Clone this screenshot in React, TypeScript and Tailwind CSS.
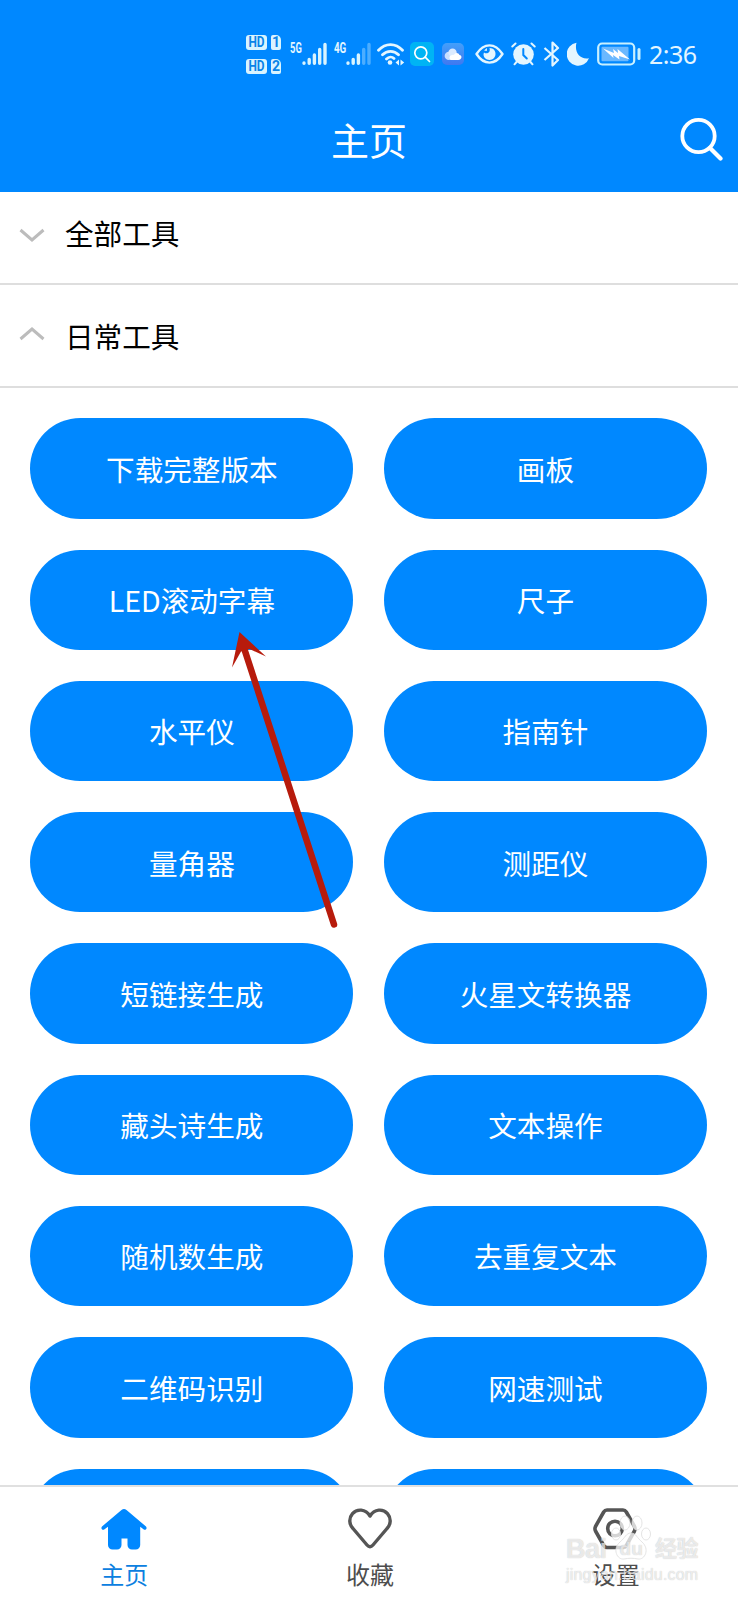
import type { ReactNode } from 'react'

const tools = [
  '下载完整版本',
  '画板',
  'LED滚动字幕',
  '尺子',
  '水平仪',
  '指南针',
  '量角器',
  '测距仪',
  '短链接生成',
  '火星文转换器',
  '藏头诗生成',
  '文本操作',
  '随机数生成',
  '去重复文本',
  '二维码识别',
  '网速测试',
  '',
  '',
]

function HdBadge({ sim }: { sim: string }) {
  return (
    <div className="flex h-[15px] gap-1 text-[14px] leading-[15px] font-bold text-[#0a84e8]">
      <span className="flex w-[21px] justify-center rounded-[3px] bg-[#d9f4ff]">
        <span className="scale-x-[0.85]">HD</span>
      </span>
      <span className="w-[10px] rounded-[2px] rounded-tr-[5px] bg-[#d9f4ff] text-center">{sim}</span>
    </div>
  )
}

function Signal({ dim }: { dim: boolean }) {
  return (
    <svg width="25" height="24" viewBox="0 0 25 24" stroke="#d9f4ff" strokeWidth="3.4" strokeLinecap="round">
      <path d="M2 21v.2M7.2 17.500v3.700M12.400 13v8.200" />
      <path d="M17.700 7.500v13.700M23 2.500v18.700" opacity={dim ? 0.35 : 1} />
    </svg>
  )
}

function StatusBar() {
  return (
    <div className="flex h-[108px] items-center pl-[246px] font-['Roboto',sans-serif] text-[#e4f6ff]">
      <div className="flex w-[35px] shrink-0 flex-col gap-[9px]">
        <HdBadge sim="1" />
        <HdBadge sim="2" />
      </div>

      <span className="ml-[9px] w-[12px] -translate-y-[6px] text-[14px] leading-none font-bold">
        <span className="inline-block origin-left scale-x-[0.67]">5G</span>
      </span>
      <Signal dim={false} />
      <span className="ml-[7px] w-[12px] -translate-y-[6px] text-[14px] leading-none font-bold">
        <span className="inline-block origin-left scale-x-[0.7]">4G</span>
      </span>
      <Signal dim />

      {/* wifi with traffic arrows */}
      <svg className="ml-[6px] shrink-0" width="28" height="24" viewBox="0 0 28 24" fill="none" stroke="currentColor" strokeWidth="2.800" strokeLinecap="round">
        <path d="M1.500 8.300C8.500.8 18.500.8 25.500 8.300M5.500 12.700c4.500-4.500 11.500-4.500 16 0M9.500 17c2.500-2.500 5.500-2.500 7.500-.5" />
        <circle cx="13" cy="20.500" r="2.300" fill="currentColor" stroke="none" />
        <path d="M22 17.500v6l-3.500-3zM23.500 17.500v6l3.700-3z" fill="currentColor" stroke="none" />
      </svg>

      <div className="ml-[5px] flex size-[24px] shrink-0 items-center justify-center rounded-[5px] bg-[#00b4f4]">
        <svg width="18" height="18" viewBox="0 0 18 18" fill="none" stroke="white" strokeWidth="1.700" strokeLinecap="round">
          <circle cx="7.800" cy="7.800" r="6" />
          <path d="m12.200 12.200 4.300 4.300" />
        </svg>
      </div>

      <div className="ml-[8px] flex size-[22px] shrink-0 items-center justify-center rounded-[5px] bg-gradient-to-b from-[#439ffa] to-[#3f78f0]">
        <svg width="18" height="13" viewBox="0 0 19 14">
          <circle cx="5" cy="8.500" r="4.500" fill="#c8dfff" />
          <circle cx="9" cy="5" r="4.500" fill="#dcebff" />
          <path d="M7 13a3 3 0 0 1 0-5c2-1 3-1 3.500-.5 1-3 5-3 6 0C20 8 19 13 15 13z" fill="white" />
        </svg>
      </div>

      {/* eye comfort */}
      <svg className="ml-[11px] shrink-0" width="29" height="20" viewBox="0 0 29 20" fill="none" stroke="currentColor">
        <path d="M1.500 10C9-1.500 20-1.500 27.500 10 20 21.500 9 21.500 1.500 10z" strokeWidth="2.400" strokeLinejoin="round" />
        <path d="M14.500 4c4 0 6 2.800 6 6s-2.500 6-6 6-6-2.800-6-5.500c0-.7.300-1.500.5-2 2.500 2 7 .5 5.500-4.500z" fill="currentColor" stroke="none" />
        <path d="M9 6.500l3-2.500-.2 3z" fill="currentColor" stroke="none" />
      </svg>

      {/* alarm */}
      <svg className="ml-[7px] shrink-0" width="25" height="24" viewBox="0 0 25 24" fill="none" stroke="currentColor" strokeWidth="2" strokeLinecap="round">
        <circle cx="12.500" cy="12.500" r="10.300" fill="currentColor" stroke="none" />
        <path d="M1.300 4.500 4.500 1.500M20.500 1.500 23.700 4.500M5.500 20l-2 2.300M19.500 20l2 2.300" />
        <path d="M12.300 7v6l3.500 3.500" stroke="#0088ff" strokeWidth="2" />
      </svg>

      <svg className="ml-[7px] shrink-0" width="17" height="26" viewBox="0 0 17 26" fill="none" stroke="currentColor" strokeWidth="2.200" strokeLinejoin="round">
        <path d="m1.500 7 13.500 12-5.500 5.500V1.500L15 7 1.500 19" />
      </svg>

      <svg className="ml-[7px] shrink-0" width="23" height="24" viewBox="0 0 23 24" fill="currentColor">
        <path d="M9.500.8C7 10 13 18 22 16.200A11.500 11.500 0 1 1 9.500.8z" />
      </svg>

      {/* battery */}
      <svg className="ml-[7px] shrink-0" width="44" height="24" viewBox="0 0 44 24">
        <rect x="1.200" y="1.500" width="36" height="21" rx="4" fill="none" stroke="#c8f0ff" strokeWidth="2.200" />
        <rect x="4.500" y="4.800" width="27" height="14.500" rx="1" fill="#6ab8ff" />
        <path d="M6 6.500 17 11l-1-4 5 4-.5-4L33 17.500 22 14l.5 3.500L16 13l.5 3z" fill="white" />
        <path d="M42 7.500v9" stroke="#c8f0ff" strokeWidth="3" strokeLinecap="round" />
      </svg>

      <span className="ml-[8px] font-['Noto_Sans',sans-serif] text-[25px] leading-none tracking-[-0.5px]">2:36</span>
    </div>
  )
}

function GroupRow({ title, open, className }: { title: string; open: boolean; className: string }) {
  return (
    <div className={`flex shrink-0 items-center border-b-2 border-[#dedede] pl-[19px] ${className}`}>
      <svg className={open ? '-mt-[4px]' : ''} width="26" height="16" viewBox="0 0 26 16" fill="none" stroke="#bcbcbc" strokeWidth="3">
        <path d={open ? 'M1.500 13 13 3l11.500 10' : 'M1.500 3 13 13 24.500 3'} />
      </svg>
      <span className={`ml-[20px] text-[28.600px] leading-none text-black ${open ? 'pt-[2px]' : 'pb-[2px]'}`}>{title}</span>
    </div>
  )
}

function NavItem({ label, active, children }: { label: string; active?: boolean; children: ReactNode }) {
  return (
    <div className={`flex flex-1 flex-col items-center pt-[20px] ${active ? 'text-[#0b80e0]' : 'text-[#4d4d4d]'}`}>
      {children}
      <span className="mt-[9px] pl-[1px] text-[24px] leading-[28px]">{label}</span>
    </div>
  )
}

function Watermark() {
  return (
    <div className="absolute right-[40px] bottom-[16px] w-[132px] font-['Liberation_Sans','Noto_Sans_CJK_SC',sans-serif] text-white/70 [text-shadow:0_0_1px_rgba(0,0,0,0.280)]">
      <svg className="absolute -top-[20px] left-[44px]" width="42" height="46" viewBox="0 0 42 46" fill="white" fillOpacity="0.750" stroke="#ddd" strokeWidth="0.800">
        <ellipse cx="6" cy="19" rx="4.500" ry="6" />
        <ellipse cx="15" cy="8" rx="5" ry="7" />
        <ellipse cx="27" cy="8" rx="5" ry="7" />
        <ellipse cx="36" cy="19" rx="4.500" ry="6" />
        <path d="M21 18c5 0 6 5 11 9 8 7 3 18-4 17-5-1-9-1-14 0-7 1-12-10-4-17 5-4 6-9 11-9z" />
      </svg>
      <div className="relative flex items-center text-[27px] leading-[28px] font-bold">
        <span className="tracking-[-0.500px]">Bai</span>
        <span className="ml-[13px] text-[19px]">du</span>
        <span className="ml-auto text-[22px] tracking-[-0.500px]">经验</span>
      </div>
      <div className="mt-[3px] text-[16px] leading-[18px] tracking-[0.200px]">jingyan.baidu.com</div>
    </div>
  )
}

export default function App() {
  return (
    <div className="relative flex h-[1600px] w-[738px] flex-col overflow-hidden bg-white font-['Noto_Sans_CJK_SC',sans-serif]">
      <header className="h-[191.500px] shrink-0 bg-[#0088ff] text-white">
        <StatusBar />
        <div className="grid h-[62px] grid-cols-[1fr_auto_1fr] items-center">
          <h1 className="col-start-2 pb-[1px] text-[38px] leading-none">主页</h1>
          <svg className="mr-[14px] justify-self-end" width="44" height="44" viewBox="0 0 44 44" fill="none" stroke="white" strokeLinecap="round">
            <circle cx="18.500" cy="19" r="16.200" strokeWidth="3.800" />
            <path d="m30 31 10.500 10.500" strokeWidth="4.200" />
          </svg>
        </div>
      </header>

      <GroupRow title="全部工具" open={false} className="h-[93.500px] pb-[5px]" />
      <GroupRow title="日常工具" open className="h-[103px]" />

      <main className="grid min-h-0 flex-1 grid-cols-2 content-start gap-x-[30.500px] gap-y-[31px] overflow-hidden pt-[30.300px] pr-[31px] pl-[30.300px]">
        {tools.map((name, i) => (
          <button
            key={i}
            type="button"
            className="h-[100.300px] rounded-full bg-[#0088ff] pt-[1px] text-[28.600px] leading-none text-white"
          >
            {name}
          </button>
        ))}
      </main>

      <nav className="flex h-[115px] shrink-0 border-t-2 border-[#e0e0e0] pl-[1px]">
        <NavItem label="主页" active>
          <svg width="46" height="44" viewBox="0 0 46 44" fill="#0088ff">
            <path d="M20.500 3a4 4 0 0 1 5 0L45 19.500c1.500 1.700-.2 4-2.200 3l-3.600-2.700V38a4.500 4.500 0 0 1-4.500 4.500H31a4.500 4.500 0 0 1-4.500-4.500v-6.500h-6V38a4.500 4.500 0 0 1-4.500 4.500h-4.500A4.500 4.500 0 0 1 7 38V19.800l-3.800 2.700c-2 1-3.700-1.300-2.200-3z" />
          </svg>
        </NavItem>
        <NavItem label="收藏">
          <svg width="46" height="44" viewBox="0 0 46 44" fill="none" stroke="#555" strokeWidth="3.400" strokeLinejoin="round">
            <path d="M23 9C18.500 1.700 10 1.500 5.500 6.700c-4 4.700-3.300 10.800.5 14.800L20 38c2 2.300 4 2.300 6 0l14-16.500c3.800-4 4.500-10.100.5-14.800C36 1.500 27.500 1.700 23 9z" />
          </svg>
        </NavItem>
        <NavItem label="设置">
          <svg width="46" height="44" viewBox="0 0 46 44" fill="none" stroke="#555" strokeWidth="3.600" strokeLinejoin="round">
            <path d="M15 3h16c1.500 0 2.500.7 3.300 2L42.500 19.500c.8 1.700.8 2.900 0 4.500l-8.200 14.500c-.8 1.300-1.800 2-3.300 2H15c-1.500 0-2.500-.7-3.300-2L3.500 24c-.8-1.600-.8-2.800 0-4.500L11.700 5c.8-1.300 1.800-2 3.300-2z" />
            <circle cx="23" cy="21.500" r="7.300" />
          </svg>
        </NavItem>
      </nav>

      {/* pointer arrow laid over the list */}
      <svg className="absolute top-[625px] left-[225px]" width="120" height="310" viewBox="225 625 120 310" fill="#b71b0c">
        <path d="M244 648 334 924.500" stroke="#b71b0c" strokeWidth="6.500" strokeLinecap="round" />
        <path d="M239.500 632 266 656.500 249.500 649 241 651.500 232 667.500z" />
      </svg>

      <Watermark />
    </div>
  )
}
